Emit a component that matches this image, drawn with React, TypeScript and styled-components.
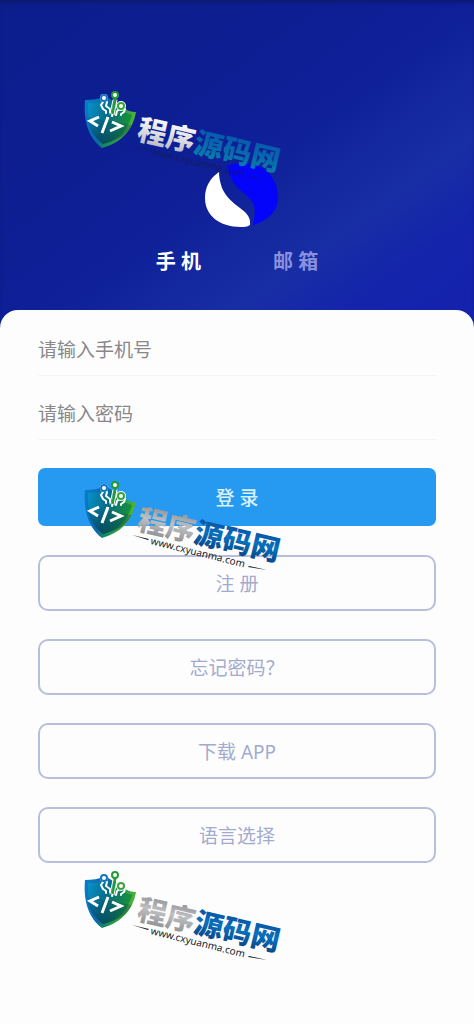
import React, { useId, useState } from 'react';
import styled, { createGlobalStyle } from 'styled-components';

const GlobalStyle = createGlobalStyle`
  *, *::before, *::after { box-sizing: border-box; }
  body {
    margin: 0;
    background: #fdfdfe;
    font-family: "Noto Sans", "Noto Sans CJK SC", sans-serif;
  }
  button, input { font-family: inherit; }
`;

const Page = styled.main`
  position: relative;
  min-height: 100vh;
  overflow: hidden;
  background: linear-gradient(144deg, #0c1e8c 0, #0d1e92 160px, #0e1f98 270px, #182ea4 390px, #1425ab 450px, #1422ac 520px);
`;

const Hero = styled.header`
  display: flex;
  flex-direction: column;
  align-items: center;
  height: 310px;
  padding-top: 160px;
  box-shadow: inset 0 4px 4px -2px #0b1a68;
`;

const LogoDrawing = styled.svg`
  display: block;
  width: 84px;
  height: 68px;
`;

const Tabs = styled.nav`
  display: flex;
  gap: 72px;
  margin-top: 18px;
`;

const Tab = styled.button<{ $active: boolean }>`
  border: 0;
  padding: 0;
  background: none;
  font-size: 20px;
  line-height: 32px;
  font-weight: 700;
  color: ${(p) => (p.$active ? '#ffffff' : '#8990dd')};
  cursor: pointer;
`;

const Sheet = styled.form`
  display: flex;
  flex-direction: column;
  gap: 28px;
  min-height: calc(100vh - 310px);
  padding: 14px 38px 40px;
  border-radius: 18px 18px 0 0;
  background: #fdfdfe;
`;

const Fields = styled.div`
  display: flex;
  flex-direction: column;
  gap: 12px;
`;

const Field = styled.input`
  width: 100%;
  height: 52px;
  border: 0;
  border-bottom: 1px solid #f5f5f7;
  padding: 0;
  background: none;
  font-size: 19px;
  line-height: 28px;
  color: #444;
  outline: none;
  &::placeholder { color: #888; opacity: 1; }
`;

const Action = styled.button<{ $primary?: boolean }>`
  width: 100%;
  height: ${(p) => (p.$primary ? 58 : 56)}px;
  border: ${(p) => (p.$primary ? '0' : '2px solid #b8bedb')};
  border-radius: ${(p) => (p.$primary ? 7 : 10)}px;
  padding: 2px 0 0;
  background: ${(p) => (p.$primary ? '#2699f1' : 'transparent')};
  font-size: 19px;
  line-height: 28px;
  font-weight: ${(p) => (p.$primary ? 500 : 400)};
  color: ${(p) => (p.$primary ? '#d9f1fc' : '#a2abce')};
  cursor: pointer;
`;

const Links = styled.div`
  display: flex;
  flex-direction: column;
  gap: 28px;
  padding-top: 1px;
`;

const Stamp = styled.svg<{ $top: number }>`
  position: absolute;
  top: ${(p) => p.$top}px;
  left: calc(50% - 162px);
  width: 220px;
  height: 110px;
  pointer-events: none;
`;

const StampName = styled.text`
  font-family: "Noto Sans CJK SC", sans-serif;
  font-size: 29px;
  font-weight: 900;
`;

const StampUrl = styled.text`
  font-family: "Noto Sans", sans-serif;
  font-size: 10px;
`;

function Logo() {
  return (
    <LogoDrawing viewBox="0 0 84 68" aria-hidden="true">
      <path d="M32 6C44 1 61 3 70 10C79 17 83 27 83 38C83 51 73 61 58 65C61 51 61 45 53 37C46 30 42 29 37 20C34 15 33 10 32 6Z" fill="#0404fa" />
      <path d="M24 12C15 18 10 27 10 38C10 55 24 67 46 67C49 67 52 67 55 65C56 58 52 53 45 48C38 43 31 37 27 28C25 22 24 17 24 12Z" fill="#fff" />
    </LogoDrawing>
  );
}

function Watermark({ top, dark = false }: { top: number; dark?: boolean }) {
  const id = useId();
  const ref = (name: string) => `url(#${id}${name})`;
  return (
    <Stamp $top={top} viewBox="0 0 220 110" aria-hidden="true">
      <defs>
        <linearGradient id={`${id}rim`} x1="0" y1="0.2" x2="1" y2="0.5">
          <stop offset="0" stopColor="#087cc4" />
          <stop offset="0.4" stopColor="#0868ab" />
          <stop offset="0.6" stopColor="#168f53" />
          <stop offset="1" stopColor="#58b632" />
        </linearGradient>
        <linearGradient id={`${id}core`} x1="0" y1="0" x2="1" y2="0.3">
          <stop offset="0" stopColor="#0793d0" />
          <stop offset="0.5" stopColor="#056c86" />
          <stop offset="1" stopColor="#17913a" />
        </linearGradient>
        <linearGradient id={`${id}shade`} x1="0" y1="0" x2="0" y2="1">
          <stop offset="0" stopColor="#04354f" stopOpacity="0.1" />
          <stop offset="1" stopColor="#04354f" stopOpacity="0.6" />
        </linearGradient>
        <linearGradient id={`${id}silver`} x1="0" y1="0" x2="0" y2="1">
          <stop offset="0.1" stopColor={dark ? '#ffffff' : '#85878a'} />
          <stop offset="0.5" stopColor={dark ? '#e5e5ea' : '#bfc0c2'} />
          <stop offset="0.9" stopColor={dark ? '#b8b9c6' : '#8f9194'} />
        </linearGradient>
        <linearGradient id={`${id}blue`} x1="0" y1="0" x2="0" y2="1">
          <stop offset="0.1" stopColor={dark ? '#0755ad' : '#07499a'} />
          <stop offset="0.5" stopColor={dark ? '#0866ad' : '#0871bd'} />
          <stop offset="0.9" stopColor={dark ? '#087fa9' : '#074587'} />
        </linearGradient>
      </defs>
      <path d="M10 20C17 20 24 19 30 16L38 21L47 27C51 30 56 32 61 32C58 49 48 62 27 68C15 59 8 43 10 20Z" fill={ref('rim')} />
      <path d="M13 23C20 23 26 22 31 19L46 30C50 33 54 34 57 35C53 49 45 59 28 64C18 56 12 43 13 23Z" fill={ref('core')} />
      <path d="M12 37L57 45C51 55 44 60 28 64C20 58 14 50 12 37Z" fill={ref('shade')} />
      <g fill="none" strokeLinecap="round" strokeLinejoin="round">
        <path d="M28 22L26 25L28 29L31 31V33M32 22L31 26L35 29V32M40 18L37 36M45 29L42 31L41 35M50 29L49 32L46 34V35" stroke="#fff" strokeWidth="2" />
        <path d="M40 18L38 34" stroke="#209b39" strokeWidth="3" strokeLinecap="butt" />
        <path d="M38 20L35 34M42 20L39 35" stroke="#fff" strokeWidth="1" />
        <circle cx="29" cy="18" r="4" fill="#fff" />
        <circle cx="46" cy="26" r="5" fill="#fff" />
        <circle cx="29" cy="18" r="3" fill="#fff" stroke="#1676bd" strokeWidth="2" />
        <circle cx="40" cy="15" r="3" fill="#fff" stroke="#229a37" strokeWidth="2" />
        <circle cx="46" cy="26" r="3" fill="#fff" stroke="#37a33a" strokeWidth="2" />
        <g stroke="#fff" strokeWidth="3" strokeLinecap="butt" strokeLinejoin="miter">
          <path d="M24 37L15 41L23 46" />
          <path d="M33 37L27 53" />
          <path d="M37 42L46 46L35 51" />
        </g>
      </g>
      <StampName transform="translate(61 59) rotate(13)" fill={ref('silver')}>
        程序<tspan fill={ref('blue')}>源码网</tspan>
      </StampName>
      <g opacity={dark ? 0.45 : 1} fill="#171d29">
        <path d="M57 65L74 69L73 70ZM174 96L192 100L173 97Z" />
        <StampUrl transform="translate(75 74) rotate(14)">www.cxyuanma.com</StampUrl>
      </g>
    </Stamp>
  );
}

export default function App() {
  const [mode, setMode] = useState<'phone' | 'email'>('phone');
  return (
    <>
      <GlobalStyle />
      <Page>
        <Hero>
          <Logo />
          <Tabs>
            <Tab type="button" $active={mode === 'phone'} onClick={() => setMode('phone')}>手 机</Tab>
            <Tab type="button" $active={mode === 'email'} onClick={() => setMode('email')}>邮 箱</Tab>
          </Tabs>
        </Hero>
        <Sheet onSubmit={(e: React.FormEvent) => e.preventDefault()}>
          <Fields>
            <Field type="tel" aria-label="手机号" placeholder="请输入手机号" />
            <Field type="password" aria-label="密码" placeholder="请输入密码" />
          </Fields>
          <Action type="submit" $primary>登 录</Action>
          <Links>
            <Action type="button">注 册</Action>
            <Action type="button">忘记密码？</Action>
            <Action type="button">下载 APP</Action>
            <Action type="button">语言选择</Action>
          </Links>
        </Sheet>
        <Watermark top={80} dark />
        <Watermark top={470} />
        <Watermark top={860} />
      </Page>
    </>
  );
}
